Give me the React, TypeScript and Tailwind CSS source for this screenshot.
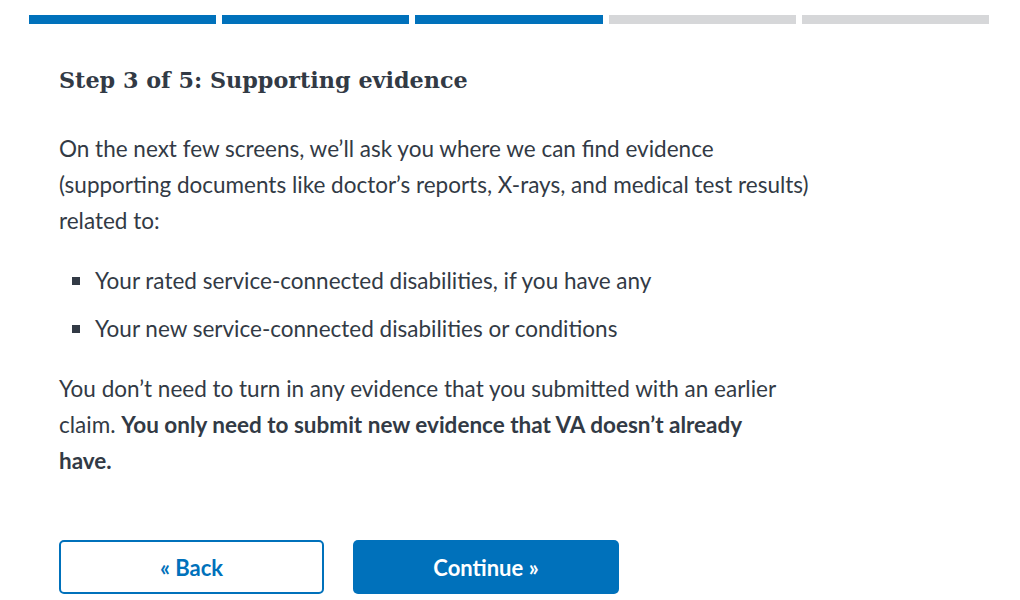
import React from 'react';

const steps = [true, true, true, false, false];

const App = () => {
  return (
    <div className="min-h-[600px] bg-white text-[#323a45] font-['Lato','Noto_Sans',sans-serif]">
      <div className="flex gap-[6px] pl-[29px] pr-[31px] pt-[15px]">
        {steps.map((done, i) => (
          <div key={i} className={`h-[9px] flex-1 ${done ? 'bg-[#0071bb]' : 'bg-[#d6d7d9]'}`} />
        ))}
      </div>

      <div className="pl-[59px] pt-[38px]">
        <h3 className="font-['DejaVu_Serif',serif] text-[22.3px] font-bold leading-[36px]">
          Step 3 of 5: Supporting evidence
        </h3>

        <div className="max-w-[770px] text-[22.5px] leading-[36px]">
          <p className="mt-[33px]">
            On the next few screens, we’ll ask you where we can find evidence (supporting documents like
            doctor’s reports, X-rays, and medical test results) related to:
          </p>
          <ul className="mt-[24px] flex flex-col gap-[12px]">
            <li className="flex items-center">
              <span className="ml-[13px] mr-[15px] h-[8px] w-[8px] bg-[#323a45]" />
              Your rated service-connected disabilities, if you have any
            </li>
            <li className="flex items-center">
              <span className="ml-[13px] mr-[15px] h-[8px] w-[8px] bg-[#323a45]" />
              Your new service-connected disabilities or conditions
            </li>
          </ul>
          <p className="mt-[24px] max-w-[730px]">
            You don’t need to turn in any evidence that you submitted with an earlier claim.{' '}
            <strong className="font-bold">You only need to submit new evidence that VA doesn’t already have.</strong>
          </p>
        </div>

        <div className="mt-[61px] flex gap-[29px]">
          <button className="h-[54px] w-[265px] rounded-[5px] border-2 border-[#0071bb] bg-white text-[22px] font-bold text-[#0071bb]">
            « Back
          </button>
          <button className="h-[54px] w-[266px] rounded-[5px] bg-[#0071bb] text-[22px] font-bold text-white">
            Continue »
          </button>
        </div>
      </div>
    </div>
  );
};

export default App;
